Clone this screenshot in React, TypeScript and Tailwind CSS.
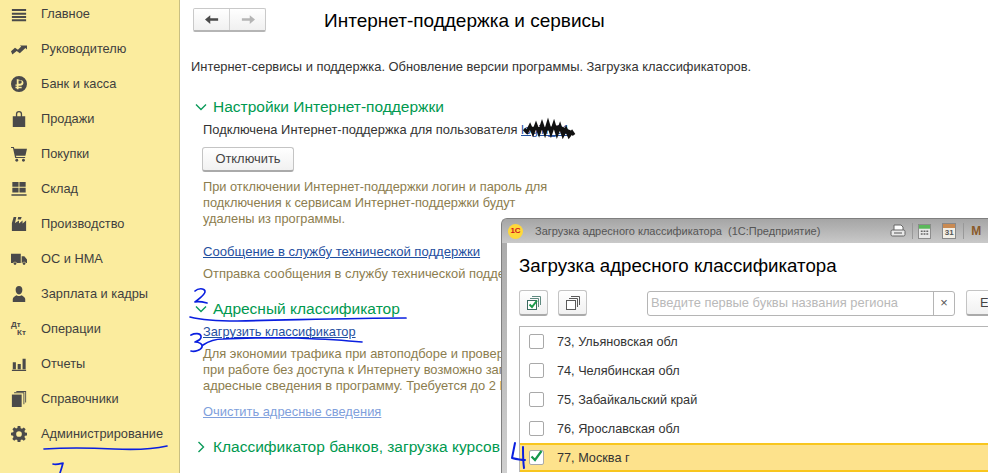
// App.tsx
import type { ReactNode } from 'react';

const ico = 'w-[16px] h-[16px] fill-[#4a4a4a]';

const navItems: { label: string; icon: ReactNode }[] = [
  {
    label: 'Главное',
    icon: (
      <svg viewBox="0 0 18 18" className={ico}>
        <path d="M1 3.400h16v2.200H1zM1 7.600h16v2.200H1zM1 11.300h16v2.200H1zM1 15h16v2.200H1z" />
      </svg>
    ),
  },
  {
    label: 'Руководителю',
    icon: (
      <svg viewBox="0 0 18 18" className={ico}>
        <path d="M0 11.500 4.500 7.500l3.300 2.300 3.700-3.500-1.600-1.300H18v4.500l-1.800-1.500-6.300 5.800-3.500-2.600-4.900 4z" />
      </svg>
    ),
  },
  {
    label: 'Банк и касса',
    icon: (
      <svg viewBox="0 0 18 18" className={ico}>
        <path
          fillRule="evenodd"
          d="M9 0a9 9 0 1 1 0 18A9 9 0 0 1 9 0zM6.500 3.500v6H5v1.600h1.500v1.100H5v1.500h1.500V15h2v-1.300H12v-1.500H8.500v-1.100h1.700c2.400 0 3.800-1.400 3.800-3.400s-1.400-3.200-3.800-3.200zm2 1.700h1.600c1.200 0 1.900.5 1.900 1.600s-.7 1.800-1.900 1.800H8.500z"
        />
      </svg>
    ),
  },
  {
    label: 'Продажи',
    icon: (
      <svg viewBox="0 0 18 18" className={ico}>
        <path
          fillRule="evenodd"
          d="M2 6h3.500V3.500a3.500 3.500 0 0 1 7 0V6H16v12H2zM7 6h4V3.500a2 2 0 0 0-4 0z"
        />
      </svg>
    ),
  },
  {
    label: 'Покупки',
    icon: (
      <svg viewBox="0 0 18 18" className={ico}>
        <path d="M0 1h3.200l.6 2H18l-1.800 8H5.600l.3 1.300h10v1.300H4.700L2.200 2.300H0z" />
        <circle cx="6.500" cy="16" r="1.600" />
        <circle cx="14" cy="16" r="1.600" />
      </svg>
    ),
  },
  {
    label: 'Склад',
    icon: (
      <svg viewBox="0 0 18 18" className={ico}>
        <path d="M1.500 1h7v5.500h-7zM9.500 1h7v5.500h-7zM1.500 7.500h7v5.500h-7zM9.500 7.500h7v5.500h-7zM.5 15h17v1.600H.5z" />
      </svg>
    ),
  },
  {
    label: 'Производство',
    icon: (
      <svg viewBox="0 0 18 18" className={ico}>
        <path d="M1 17V8l2-7h3L4.500 8l4.500-3v3.500L13 5v3.500L17 5v12z" />
        <path d="M8 1h4L11 4H7.500z" />
      </svg>
    ),
  },
  {
    label: 'ОС и НМА',
    icon: (
      <svg viewBox="0 0 18 18" className={ico}>
        <path d="M0 3h11v10.500H6.500a2.200 2.200 0 0 0-4 0H0zM12 6h3l3 3.500v4h-1.300a2.200 2.200 0 0 0-4 0H12z" />
        <circle cx="4.500" cy="14.200" r="1.500" />
        <circle cx="14.700" cy="14.200" r="1.500" />
      </svg>
    ),
  },
  {
    label: 'Зарплата и кадры',
    icon: (
      <svg viewBox="0 0 18 18" className={ico}>
        <path d="M9 0c2.400 0 3.800 1.700 3.800 4.200S11.400 9.500 9 9.500 5.200 6.700 5.200 4.200 6.600 0 9 0zM2 14.500c0-2 3-3.500 4.500-4.200.8.700 1.600 1 2.500 1s1.700-.3 2.500-1c1.500.7 4.500 2.200 4.500 4.200V18H2z" />
      </svg>
    ),
  },
  {
    label: 'Операции',
    icon: (
      <div className="relative w-[16px] h-[16px] text-[#4a4a4a] font-bold text-[8px] leading-none">
        <span className="absolute left-0 top-0">Дт</span>
        <span className="absolute left-[6px] top-[8px]">Кт</span>
      </div>
    ),
  },
  {
    label: 'Отчеты',
    icon: (
      <svg viewBox="0 0 18 18" className={ico}>
        <path d="M2 7h3.500v8H2zM7.500 9H11v6H7.500zM13 3h3.500v12H13zM1 15.500h16V17H1z" />
      </svg>
    ),
  },
  {
    label: 'Справочники',
    icon: (
      <svg viewBox="0 0 18 18" className={ico}>
        <path d="M1 4h11v14H1z" />
        <path d="M3.500 1.500H15V15h-1V2.500H3.500zM6 0h11v13h-1V1H6z" />
      </svg>
    ),
  },
  {
    label: 'Администрирование',
    icon: (
      <svg viewBox="0 0 18 18" className={ico}>
        <path
          fillRule="evenodd"
          d="M7.500 0h3l.4 2.400 1.500.6 2-1.400 2.100 2.100-1.400 2 .6 1.500 2.400.4v3l-2.400.4-.6 1.500 1.400 2-2.100 2.100-2-1.400-1.500.6-.4 2.400h-3l-.4-2.400-1.500-.6-2 1.400-2.100-2.100 1.400-2-.6-1.500L0 10.500v-3l2.400-.4.6-1.500-1.400-2 2.100-2.100 2 1.400 1.500-.6zM9 5.800a3.200 3.200 0 1 0 0 6.400 3.200 3.200 0 0 0 0-6.400z"
        />
      </svg>
    ),
  },
];

const regions = [
  { text: '73, Ульяновская обл' },
  { text: '74, Челябинская обл' },
  { text: '75, Забайкальский край' },
  { text: '76, Ярославская обл' },
  { text: '77, Москва г', checked: true },
];

function Sidebar() {
  return (
    <aside className="w-[180px] h-full shrink-0 bg-[#fbec9e] border-r border-[#c9bf82] overflow-hidden">
      <div className="-mt-[4px]">
        {navItems.map((item) => (
          <div key={item.label} className="h-[35px] flex items-center text-[#3f3f3f]">
            <div className="w-[41px] pl-[11px] shrink-0 flex items-center">{item.icon}</div>
            <span className="text-[12.8px]">{item.label}</span>
          </div>
        ))}
      </div>
    </aside>
  );
}

function Chevron({ open }: { open: boolean }) {
  return (
    <svg viewBox="0 0 12 12" className="w-[12px] h-[12px] fill-none stroke-[#0b9a5a] stroke-[1.4]">
      <path d={open ? 'M1 3.500 6 8.500l5-5' : 'M3.500 1 8.500 6l-5 5'} />
    </svg>
  );
}

function SectionHeader({ open, children }: { open: boolean; children: ReactNode }) {
  return (
    <div className="flex items-center gap-[6px] pl-[4px] h-[20px] whitespace-nowrap text-[15.5px] text-[#00994f]">
      <Chevron open={open} />
      {children}
    </div>
  );
}

function Content() {
  return (
    <main className="flex-1 min-w-0 pl-[11px] overflow-hidden">
      <div className="flex items-center mt-[8px] h-[24px]">
        <div className="ml-[2px] w-[73px] h-[24px] flex border border-[#c9c9c9] border-b-2 border-b-[#b5b5b5] rounded-[2px] bg-gradient-to-b from-white to-[#f0f0f0]">
          <div className="flex-1 flex items-center justify-center border-r border-[#d0d0d0] text-[#4a4a4a]">
            <svg viewBox="0 0 16 12" className="w-[14px] h-[11px] fill-current">
              <path d="M6 1v3.500h9v3H6V11L0 6z" />
            </svg>
          </div>
          <div className="flex-1 flex items-center justify-center text-[#b5b5b5]">
            <svg viewBox="0 0 16 12" className="w-[14px] h-[11px] fill-current">
              <path d="M10 1v3.500H1v3h9V11l6-5z" />
            </svg>
          </div>
        </div>
        <h1 className="ml-[58px] pt-[2px] text-[19px] whitespace-nowrap text-black">Интернет-поддержка и сервисы</h1>
      </div>

      <p className="mt-[27px] text-[12.9px] h-[16px] leading-[16px] whitespace-nowrap text-[#333]">
        Интернет-сервисы и поддержка. Обновление версии программы. Загрузка классификаторов.
      </p>

      <div className="mt-[22px]">
        <SectionHeader open>Настройки Интернет-поддержки</SectionHeader>
      </div>
      <div className="pl-[12px] text-[12.9px] leading-[16px]">
        <p className="mt-[5px] h-[16px] whitespace-nowrap text-[#333]">
          Подключена Интернет-поддержка для пользователя{' '}
          <span className="text-[#1f4fa0] underline">login_01</span>
        </p>
        <button className="mt-[9px] -ml-px block w-[92px] h-[25px] border border-[#c4c4c4] border-b-2 border-b-[#aaa] rounded-[3px] bg-gradient-to-b from-white to-[#f1f1f1] text-[#444]">
          Отключить
        </button>
        <p className="mt-[7px] w-[350px] text-[12.8px] text-[#8c7d4e]">
          При отключении Интернет-поддержки логин и пароль для подключения к сервисам Интернет-поддержки будут удалены из программы.
        </p>
        <a className="mt-[17px] block h-[16px] whitespace-nowrap text-[13.1px] text-[#1f4fa0] underline">
          Сообщение в службу технической поддержки
        </a>
        <p className="mt-[6px] h-[16px] whitespace-nowrap text-[#8c7d4e]">
          Отправка сообщения в службу технической поддержки
        </p>
      </div>

      <div className="mt-[17px]">
        <SectionHeader open>Адресный классификатор</SectionHeader>
      </div>
      <div className="pl-[12px] text-[12.9px] leading-[16px]">
        <a className="mt-[5px] block h-[16px] whitespace-nowrap text-[12.8px] text-[#1f4fa0] underline">Загрузить классификатор</a>
        <div className="mt-[6px] whitespace-nowrap text-[#8c7d4e]">
          <p>Для экономии трафика при автоподборе и проверке адреса,</p>
          <p>при работе без доступа к Интернету возможно загрузить</p>
          <p>адресные сведения в программу. Требуется до 2 ГБ.</p>
        </div>
        <a className="mt-[10px] block h-[16px] whitespace-nowrap text-[#7f9fdc] underline">Очистить адресные сведения</a>
      </div>

      <div className="mt-[17px]">
        <SectionHeader open={false}>Классификатор банков, загрузка курсов валют</SectionHeader>
      </div>
    </main>
  );
}

function Dialog() {
  return (
    <section className="absolute left-[501px] top-[218px] w-[487px] h-[255px] overflow-hidden rounded-tl-[6px] border-l border-t border-[#7f7f7f] bg-gradient-to-b from-[#a8a8a8] to-[#d0d0d0] flex flex-col">
      <header className="h-[24px] shrink-0 flex items-center pl-[6px] text-[11px] text-[#555] bg-gradient-to-b from-[#a5a5a5] to-[#c9c9c9]">
        <div className="w-[15px] h-[15px] shrink-0 rounded-full bg-[#ffd83a] flex items-center justify-center text-[8px] leading-none font-bold text-[#d0131a]">
          1С
        </div>
        <span className="ml-[12px] whitespace-nowrap">Загрузка адресного классификатора&nbsp; (1С:Предприятие)</span>
        <div className="ml-[70px] flex items-center h-full">
          <svg viewBox="0 0 16 14" className="w-[16px] h-[14px]">
            <path d="M4 1h7l2 2v4H4z" fill="#fff" stroke="#666" />
            <rect x="1" y="6" width="14" height="6" rx="1.500" fill="#e8e8e8" stroke="#666" />
            <path d="M4 9h8" stroke="#555" />
          </svg>
          <div className="ml-[6px] h-[16px] border-l border-[#999]" />
          <svg viewBox="0 0 14 16" className="ml-[5px] w-[13px] h-[15px]">
            <rect x=".5" y=".5" width="13" height="15" fill="#e9e9e9" stroke="#888" />
            <rect x="1" y="1" width="12" height="4" fill="#5bb85b" />
            <path d="M3 7h2v1.500H3zM6 7h2v1.500H6zM9 7h2v1.500H9zM3 10h2v1.500H3zM6 10h2v1.500H6zM9 10h2v1.500H9z" fill="#666" />
          </svg>
          <div className="ml-[11px] w-[14px] h-[16px] relative border border-[#888] bg-[#f2efe6] flex items-end justify-center text-[8px] leading-[10px] font-bold text-[#555]">
            <div className="absolute inset-x-0 top-0 h-[4px] bg-[#c98a52]" />
            31
          </div>
          <div className="ml-[7px] h-[16px] border-l border-[#999]" />
          <span className="ml-[7px] text-[12px] font-bold text-[#8a5a2a]">M</span>
        </div>
      </header>

      <div className="flex-1 min-h-0 ml-[5px] bg-white pl-[12px]">
        <h2 className="mt-[12px] h-[22px] leading-[22px] text-[18.7px] whitespace-nowrap text-black">
          Загрузка адресного классификатора
        </h2>
        <div className="mt-[13px] flex items-center h-[26px]">
          <button className="shrink-0 w-[29px] h-[26px] flex items-center justify-center border border-[#c4c4c4] border-b-2 border-b-[#aaa] rounded-[3px] bg-gradient-to-b from-white to-[#f1f1f1]">
            <svg viewBox="0 0 16 16" className="w-[16px] h-[16px] fill-none">
              <path d="M6 1.500h8.500V10M4 3.500h8.500V12" stroke="#5f8a80" />
              <rect x="1.500" y="5.500" width="9" height="9" fill="#fff" stroke="#3a6a60" />
              <path d="M3.500 9.500 6 12l5-6.500" stroke="#1d9b4b" strokeWidth="2" />
            </svg>
          </button>
          <button className="shrink-0 ml-[10px] w-[29px] h-[26px] flex items-center justify-center border border-[#c4c4c4] border-b-2 border-b-[#aaa] rounded-[3px] bg-gradient-to-b from-white to-[#f1f1f1]">
            <svg viewBox="0 0 16 16" className="w-[16px] h-[16px] fill-none stroke-[#5a5a5a]">
              <path d="M6 1.500h8.500V10M4 3.500h8.500V12" />
              <rect x="1.500" y="5.500" width="9" height="9" fill="#fff" />
            </svg>
          </button>
          <div className="shrink-0 ml-[60px] w-[308px] h-[25px] flex border border-[#b5b5b5] rounded-[3px] text-[12.9px]">
            <div className="flex-1 pl-[3px] flex items-center whitespace-nowrap text-[#b9b9b9]">
              Введите первые буквы названия региона
            </div>
            <div className="w-[21px] flex items-center justify-center border-l border-[#b5b5b5] text-[#555]">×</div>
          </div>
          <button className="shrink-0 ml-[11px] w-[40px] h-[26px] pl-[13px] text-left border border-[#c4c4c4] border-b-2 border-b-[#aaa] rounded-[3px] bg-gradient-to-b from-white to-[#f1f1f1] text-[12.9px] text-[#444]">
            Е
          </button>
        </div>

        <div className="mt-[10px] border-l border-t border-[#b5b5b5]">
          {regions.map((r) => (
            <div
              key={r.text}
              className={
                r.checked
                  ? 'h-[29px] pl-[9px] flex items-center text-[12.7px] text-[#333] bg-[#fde28c] border-y-2 border-[#f8c61e]'
                  : 'h-[29px] pl-[9px] flex items-center text-[12.7px] text-[#333]'
              }
            >
              <div className="relative w-[15px] h-[15px] shrink-0 rounded-[2px] border border-[#a9a9a9] bg-white">
                {r.checked && (
                  <svg viewBox="0 0 15 15" className="absolute -left-px -top-[2px] w-[15px] h-[15px] fill-none stroke-[#16984c] stroke-[2.2]">
                    <path d="M2.500 7.500 6 11l6.500-9" />
                  </svg>
                )}
              </div>
              <span className="ml-[13px] pt-[2px] whitespace-nowrap">{r.text}</span>
            </div>
          ))}
        </div>
      </div>
    </section>
  );
}

// pen marks drawn over the screenshot
function Scribbles() {
  return (
    <svg viewBox="0 0 988 473" className="absolute inset-0 w-[988px] h-[473px] pointer-events-none fill-none">
      <path
        d="M524 129l3 3 3-6 3 7 3-8 3 8 3-9 3 9 3-10 3 10 3-9 3 10 3-8 3 9 3-6 3 7 3-4 2 3M528 129c8-3 16 2 24-1s14 3 21 5"
        stroke="#111"
        strokeWidth="3.200"
      />
      <g stroke="#0a1fe0" strokeWidth="1.700" strokeLinecap="round" strokeLinejoin="round">
        <path d="M44 449c30-2 50-1 70 0s40 0 53-3" />
        <path d="M53 464c3 1 6 0 10-1-1 4-2 7-3 10" />
        <path d="M195 291c3-3 9-3 10 0s-6 8-10 11c4-1 8 0 12 1" />
        <path d="M190 317c12 3 28 4 47 4 60-1 110-3 169-3" />
        <path d="M191 335c4-2 9-2 10 1s-3 5-6 6c4 0 8 2 7 5s-7 5-11 4" />
        <path d="M203 345c6-4 12-6 20-6 28-2 52-1 74-1 24 1 44 2 65 4" />
        <path d="M515 443c-1 5-2 10-3 15 4 1 9 2 13 2M523 447c0 7 0 14 1 21" strokeWidth="2" />
      </g>
    </svg>
  );
}

export default function App() {
  return (
    <div className="relative w-[988px] h-[473px] overflow-hidden bg-white flex font-['Liberation_Sans',Arial,sans-serif]">
      <Sidebar />
      <Content />
      <Dialog />
      <Scribbles />
    </div>
  );
}
